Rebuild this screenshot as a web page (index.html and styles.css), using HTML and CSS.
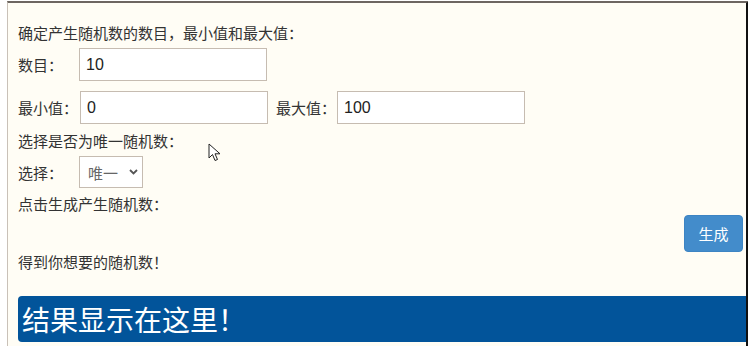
FILE: index.html
```html
<!DOCTYPE html>
<html lang="zh">
<head>
<meta charset="utf-8">
<title>随机数生成</title>
<link rel="stylesheet" href="styles.css">
</head>
<body>
<div class="frame">
  <div class="panel">
    <div class="line">确定产生随机数的数目，最小值和最大值：</div>
    <div class="row row-first">
      <span class="label">数目：</span>
      <input class="field" type="text" value="10">
    </div>
    <div class="row row-second">
      <span class="label label-tight">最小值：</span>
      <input class="field" type="text" value="0">
      <span class="label label-gap">最大值：</span>
      <input class="field" type="text" value="100">
    </div>
    <div class="line line-choose">选择是否为唯一随机数：</div>
    <div class="row row-select">
      <span class="label">选择：</span>
      <span class="select-wrap">
        <select class="select"><option>唯一</option><option>不唯一</option></select>
        <svg class="chev" width="9" height="6" viewBox="0 0 9 6"><path d="M1 1 L4.5 4.5 L8 1" fill="none" stroke="#555" stroke-width="1.8"/></svg>
      </span>
    </div>
    <div class="line line-click">点击生成产生随机数：</div>
    <div class="btn-row"><button class="btn">生成</button></div>
    <div class="line">得到你想要的随机数！</div>
    <div class="result">结果显示在这里！</div>
  </div>
  <svg class="cursor" width="14" height="20" viewBox="0 0 14 20"><path d="M1 1 L1 15 L4.5 11.5 L7 17.5 L9.5 16.5 L7 10.8 L12 10.8 Z" fill="#fff" stroke="#222" stroke-width="1" stroke-linejoin="round"/></svg>
</div>
</body>
</html>
```
FILE: styles.css
```css
html, body {
  margin: 0;
  padding: 0;
  background: #ffffff;
}
body {
  font-family: "Noto Sans CJK SC", "Liberation Sans", sans-serif;
  color: #333;
}
.frame {
  position: relative;
  margin-top: 1px;
  margin-left: 7px;
  width: 738px;
  height: 343px;
  border-top: 2px solid #6d6661;
  border-left: 1px solid #c9c1b8;
  border-right: 3px solid #111;
  background: #fffdf5;
  overflow: hidden;
}
.panel {
  padding: 20px 0 0 10px;
}
.line {
  font-size: 15px;
  line-height: 20px;
  height: 20px;
  white-space: nowrap;
}
.row {
  display: flex;
  align-items: center;
  height: 33px;
}
.row-first { margin-top: 5px; }
.row-second { margin-top: 10px; }
.row-select { margin-top: 5px; height: 32px; }
.line-choose { margin-top: 7px; }
.line-click { margin-top: 6px; }
.label {
  width: 61px;
  flex: none;
  font-size: 15px;
  white-space: nowrap;
}
.label-tight { width: 62px; }
.label-gap { margin-left: 8px; }
.field {
  box-sizing: border-box;
  width: 188px;
  height: 33px;
  margin: 0;
  padding: 0 6px;
  border: 1px solid #c6bcb1;
  border-radius: 0;
  background: #fff;
  font-family: "Liberation Sans", "Noto Sans CJK SC", sans-serif;
  font-size: 16px;
  color: #222;
  outline: none;
}
.select-wrap {
  position: relative;
  display: inline-block;
}
.select {
  -webkit-appearance: none;
  appearance: none;
  box-sizing: border-box;
  width: 64px;
  height: 32px;
  margin: 0;
  padding: 0 0 0 8px;
  border: 1px solid #c6bcb1;
  border-radius: 0;
  background: #fff;
  font-family: "Noto Sans CJK SC", sans-serif;
  font-size: 15px;
  color: #666;
  outline: none;
}
.chev {
  position: absolute;
  left: 50px;
  top: 13px;
  pointer-events: none;
}
.btn-row {
  display: flex;
  justify-content: flex-end;
  margin-top: 1px;
  padding-right: 3px;
}
.btn {
  width: 59px;
  height: 37px;
  margin: 0;
  border: 1px solid #3d84c3;
  border-radius: 4px;
  background: #438ccb;
  color: #fff;
  font-family: "Noto Sans CJK SC", sans-serif;
  font-size: 15px;
  padding: 0;
}
.result {
  margin-top: 24px;
  height: 46px;
  line-height: 46px;
  background: #02549a;
  border-top-left-radius: 4px;
  border-bottom-left-radius: 4px;
  color: #fff;
  font-size: 28px;
  padding-left: 4px;
  white-space: nowrap;
}
.cursor {
  position: absolute;
  left: 200px;
  top: 140px;
}
```
